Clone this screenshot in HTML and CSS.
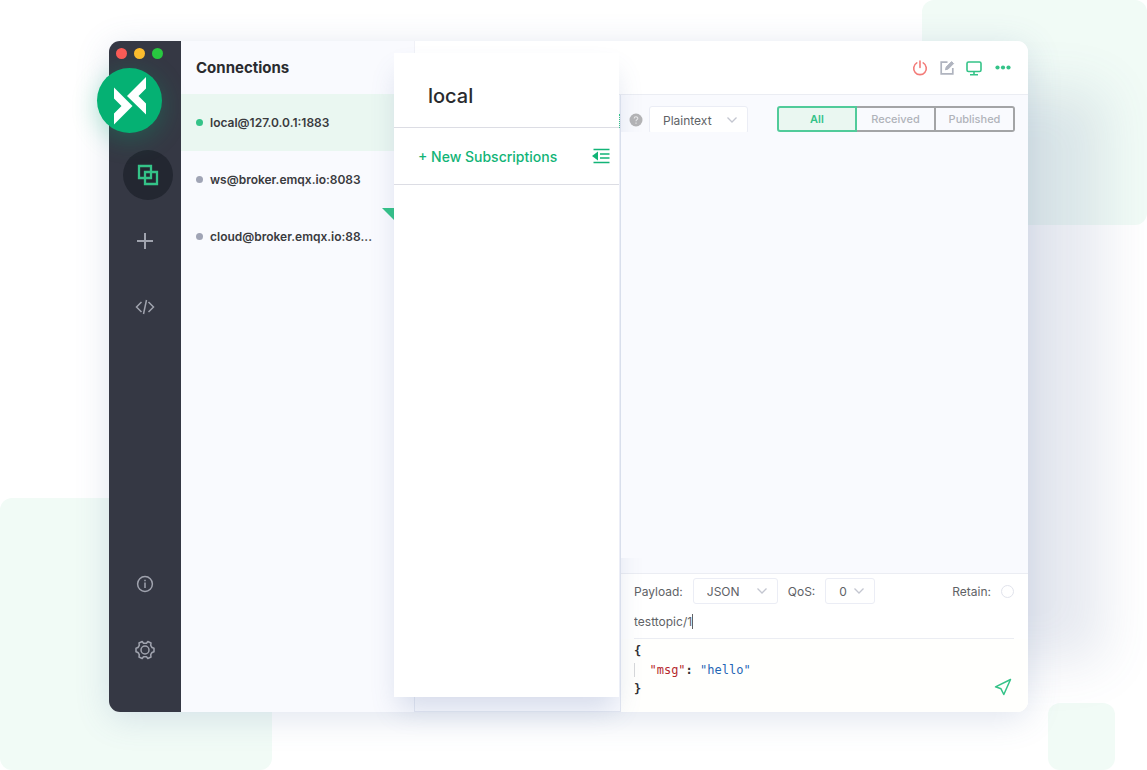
FILE: index.html
```html
<!DOCTYPE html>
<html lang="en">
<head>
  <meta charset="UTF-8">
  <meta name="viewport" content="width=device-width, initial-scale=1">
  <title>MQTTX</title>
  <link rel="stylesheet" href="styles.css">
</head>
<body>

<div class="deco deco-top"></div>
<div class="deco deco-left"></div>
<div class="deco deco-small"></div>

<div class="window">
  <!-- sidebar -->
  <aside class="sidebar">
    <div class="lights">
      <span class="light red"></span>
      <span class="light yellow"></span>
      <span class="light green"></span>
    </div>
    <nav class="nav">
      <button class="nav-item active" type="button" aria-label="Connections">
        <svg width="22" height="22" viewBox="0 0 22 22" fill="none" stroke="#34c388" stroke-width="2.300">
          <path d="M2 2h12v12H2zM8 8h12v12H8z"/>
        </svg>
      </button>
      <button class="nav-item" type="button" aria-label="New connection">
        <svg width="18" height="18" viewBox="0 0 18 18" fill="none" stroke="#a0a3ae" stroke-width="2">
          <path d="M9 1v16M1 9h16"/>
        </svg>
      </button>
      <button class="nav-item" type="button" aria-label="Script">
        <svg width="20" height="16" viewBox="0 0 20 16" fill="none" stroke="#a0a3ae" stroke-width="1.500">
          <path d="M6.500 3L1.500 8l5 5M13.500 3l5 5-5 5M11.500 1L8.500 15"/>
        </svg>
      </button>
      <span class="nav-space"></span>
      <button class="nav-item" type="button" aria-label="About">
        <svg width="18" height="18" viewBox="0 0 18 18" fill="none" stroke="#a0a3ae" stroke-width="1.500">
          <circle cx="9" cy="9" r="7.400"/>
          <path d="M9 7.500v5.500M9 4.800v1.500"/>
        </svg>
      </button>
      <button class="nav-item" type="button" aria-label="Settings">
        <svg width="20" height="20" viewBox="0 0 20 20" fill="none" stroke="#a0a3ae" stroke-width="1.500" stroke-linejoin="round">
          <circle cx="10" cy="10" r="4"/>
          <path d="M7.200 1.500L8.500 3.300H11.500L12.800 1.500L16 3L15.700 5.300L17 7.500L19 8.200V11.800L17 12.500L15.700 14.700L16 17L12.800 18.500L11.500 16.700H8.500L7.200 18.500L4 17L4.300 14.700L3 12.500L1 11.800V8.200L3 7.500L4.300 5.300L4 3Z"/>
        </svg>
      </button>
    </nav>
    <div class="logo">
      <svg width="34" height="50" viewBox="0 0 34 50" fill="#fff">
        <path d="M1 11.500L19.500 30L1 48.500V37.500L8.500 30L1 22.500Z"/>
        <path d="M33 1L14 20L33 38.500V27.500L25.500 20L33 12.500Z"/>
      </svg>
    </div>
  </aside>

  <!-- connections -->
  <section class="connections">
    <h1 class="connections-title">Connections</h1>
    <ul class="connection-list">
      <li><a class="connection online" href="#local"><span class="dot"></span><span class="name">local@127.0.0.1:1883</span></a></li>
      <li><a class="connection" href="#ws"><span class="dot"></span><span class="name">ws@broker.emqx.io:8083</span></a></li>
      <li><a class="connection ssl" href="#cloud"><span class="dot"></span><span class="name">cloud@broker.emqx.io:88...</span></a></li>
    </ul>
  </section>

  <main class="main">
    <header class="topbar">
      <button class="icon-btn" type="button" aria-label="Disconnect">
        <svg width="16" height="16" viewBox="0 0 16 16" fill="none" stroke="#f37b78" stroke-width="1.600" stroke-linecap="round">
          <path d="M4.800 2.900a6.300 6.300 0 1 0 6.400 0M8 1v6.500"/>
        </svg>
      </button>
      <button class="icon-btn" type="button" aria-label="Edit">
        <svg width="16" height="16" viewBox="0 0 16 16" fill="none" stroke="#b0b4bf">
          <path d="M8.500 2.200H2.200v11.600h11.600V8" stroke-width="1.700"/>
          <path d="M6.500 9.800L7.200 7L12.600 1.600L14.600 3.600L9.200 9Z" fill="#b0b4bf" stroke-width="1"/>
        </svg>
      </button>
      <button class="icon-btn" type="button" aria-label="Monitor">
        <svg width="16" height="16" viewBox="0 0 16 16" fill="none" stroke="#34c388" stroke-width="1.600">
          <rect x="1" y="2" width="14" height="9.500" rx="1.500"/>
          <path d="M8 11.500v3M4 14.700h8"/>
        </svg>
      </button>
      <button class="icon-btn" type="button" aria-label="More">
        <svg width="16" height="16" viewBox="0 0 16 16" fill="#34c388">
          <circle cx="2.500" cy="7.500" r="2.100"/><circle cx="8" cy="7.500" r="2.100"/><circle cx="13.500" cy="7.500" r="2.100"/>
        </svg>
      </button>
    </header>

    <div class="content">
      <div class="topics"><span class="drag"></span></div>

      <section class="chat">
        <div class="toolbar">
          <svg class="help" width="14" height="14" viewBox="0 0 14 14" fill="none">
            <circle cx="7" cy="7" r="6.500" fill="#b4b4b6"/>
            <path d="M5.200 5.600C5.200 3.200 8.800 3.300 8.800 5.400C8.800 6.700 7 6.700 7 8.300M7 9.500v1.200" stroke="#e8e8ea" stroke-width="1.100"/>
          </svg>
          <span class="select format">
            <select aria-label="Format"><option>Plaintext</option></select>
            <svg width="12" height="8" viewBox="0 0 12 8" fill="none" stroke="#c3c6d0" stroke-width="1.300"><path d="M1.500 1.500L6 6l4.500-4.500"/></svg>
          </span>
          <div class="filter">
            <button class="checked" type="button">All</button>
            <button type="button">Received</button>
            <button type="button">Published</button>
          </div>
        </div>

        <div class="messages"></div>

        <form class="publish">
          <div class="options">
            <label for="payload">Payload:</label>
            <span class="select payload">
              <select id="payload"><option>JSON</option></select>
              <svg width="12" height="8" viewBox="0 0 12 8" fill="none" stroke="#c3c6d0" stroke-width="1.300"><path d="M1.500 1.500L6 6l4.500-4.500"/></svg>
            </span>
            <label for="qos">QoS:</label>
            <span class="select qos">
              <select id="qos"><option>0</option></select>
              <svg width="12" height="8" viewBox="0 0 12 8" fill="none" stroke="#c3c6d0" stroke-width="1.300"><path d="M1.500 1.500L6 6l4.500-4.500"/></svg>
            </span>
            <label class="retain">Retain: <input type="checkbox"></label>
          </div>
          <div class="topic">
            <input type="text" value="testtopic/1" aria-label="Topic"><span class="caret"></span>
          </div>
          <div class="editor">
            <pre class="code" role="textbox" aria-label="Message" aria-multiline="true" contenteditable="true" spellcheck="false"><span>{</span>
<span class="indent">  <span class="key">"msg"</span>: <span class="value">"hello"</span></span>
<span>}</span></pre>
            <button class="icon-btn" type="submit" aria-label="Send">
              <svg width="18" height="18" viewBox="0 0 18 18" fill="none" stroke="#34c388" stroke-width="1.500" stroke-linejoin="round">
                <path d="M16.500 1.500L1.500 8.800L7 10.800L9.800 16.500Z"/>
              </svg>
            </button>
          </div>
        </form>
      </section>
    </div>

    <!-- subscriptions panel, lies over the window -->
    <section class="panel">
      <h2 class="panel-title">local</h2>
      <div class="panel-actions">
        <button class="new-sub" type="button">+ New Subscriptions</button>
        <button class="icon-btn" type="button" aria-label="Hide subscriptions">
          <svg width="18" height="16" viewBox="0 0 18 16" fill="none" stroke="#12b477" stroke-width="1.500">
            <path d="M1.500 1.500H17.500M8 6H17.500M8 10H17.500M1.500 14.500H17.500"/>
            <path d="M6 3.500V12.500L0 8Z" fill="#12b477" stroke="none"/>
          </svg>
        </button>
      </div>
    </section>
  </main>
</div>

</body>
</html>
```

FILE: styles.css
```css
* {
  box-sizing: border-box;
}

body {
  position: relative;
  display: flex;
  min-height: 100vh;
  margin: 0;
  padding: 41px 119px 58px 109px;
  overflow: hidden;
  background: #fff;
  color: #2a2b2e;
  font-family: Inter, "Liberation Sans", sans-serif;
  font-size: 12px;
}

button,
input,
select {
  margin: 0;
  padding: 0;
  border: 0;
  background: none;
  color: inherit;
  font: inherit;
}

svg {
  display: block;
}

/* background squares */
.deco {
  position: absolute;
  border-radius: 12px;
  background: #f1fbf6;
}

.deco-top {
  top: 0;
  right: 0;
  width: 225px;
  height: 225px;
}

.deco-left {
  bottom: 0;
  left: 0;
  width: 272px;
  height: 272px;
}

.deco-small {
  right: 32px;
  bottom: 0;
  width: 67px;
  height: 67px;
}

.window {
  position: relative;
  display: grid;
  flex: 1;
  grid-template-columns: 72px 233px 1fr;
  border-radius: 11px;
  background: #f9fafe;
  box-shadow:
    0 6px 34px rgba(80, 105, 160, 0.18),
    125px 0 50px -50px rgba(80, 100, 150, 0.14);
}

/* sidebar */
.sidebar {
  position: relative;
  display: flex;
  flex-direction: column;
  padding: 7px 8px 37px;
  border-radius: 11px 0 0 11px;
  background: #353844;
}

.lights {
  display: flex;
  gap: 7px;
  margin-left: -1px;
}

.light {
  width: 11px;
  height: 11px;
  border-radius: 50%;
}

.red { background: #fc5b57; }
.yellow { background: #fdbc2e; }
.green { background: #28c840; }

.nav {
  display: flex;
  flex: 1;
  flex-direction: column;
  align-items: center;
  gap: 16px;
  padding-top: 91px;
}

.nav-item {
  display: grid;
  place-items: center;
  width: 50px;
  height: 50px;
  border-radius: 50%;
}

.nav-item.active {
  align-self: flex-end;
  background: #232731;
}

.nav-space {
  flex: 1;
}

.logo {
  position: absolute;
  top: 27px;
  left: -12px;
  display: grid;
  place-items: center;
  width: 65px;
  height: 65px;
  border-radius: 50%;
  background: #05b173;
  box-shadow: 0 6px 26px rgba(5, 177, 115, 0.3);
}

/* connections */
.connections-title {
  display: flex;
  align-items: center;
  height: 53px;
  margin: 0;
  padding-left: 15px;
  font-size: 15px;
  font-weight: 700;
}

.connection-list {
  margin: 0;
  padding: 0;
  list-style: none;
}

.connection {
  position: relative;
  display: flex;
  align-items: center;
  gap: 7px;
  height: 57px;
  padding-left: 15px;
  color: #3a3b3e;
  font-size: 12px;
  font-weight: 600;
  text-decoration: none;
}

.connection.online {
  background: #eaf7f1;
}

.dot {
  width: 7px;
  height: 7px;
  border-radius: 50%;
  background: #a0a4b5;
}

.online .dot {
  background: #34c388;
}

.ssl::after {
  content: "";
  position: absolute;
  top: 0;
  right: 0;
  width: 32px;
  height: 32px;
  background: #34c388;
  clip-path: polygon(0 0, 100% 0, 100% 100%);
}

/* main */
.main {
  position: relative;
  display: flex;
  flex-direction: column;
  min-width: 0;
}

.topbar {
  display: flex;
  align-items: center;
  justify-content: flex-end;
  gap: 11px;
  height: 54px;
  padding: 0 17px;
  border-bottom: 1px solid #ebedf3;
  border-left: 1px solid #f0f1f7;
  border-radius: 0 11px 0 0;
  background: #fff;
}

.topbar .icon-btn:last-child {
  padding-left: 2px;
}

.content {
  display: grid;
  flex: 1;
  grid-template-columns: 207px 1fr;
}

.topics {
  display: flex;
  justify-content: flex-end;
  border: solid #e4e8f2;
  border-width: 0 1px 1px;
}

.drag {
  position: relative;
  z-index: 2;
  height: 14px;
  margin-top: 19px;
  border-right: 1px dotted #34c388;
}

.chat {
  display: flex;
  flex-direction: column;
  min-width: 0;
}

.toolbar {
  display: flex;
  height: 37px;
  padding: 11px 13px 0 8px;
}

.help {
  margin: 7px 6px 0 0;
}

.select {
  display: grid;
  align-items: center;
  border: 1px solid #ebedf5;
  border-radius: 3px;
  background: #fff;
  color: #606266;
}

.select select {
  grid-area: 1 / 1;
  height: 24px;
  padding-left: 13px;
  appearance: none;
}

.select svg {
  grid-area: 1 / 1;
  justify-self: end;
  margin-right: 9px;
  pointer-events: none;
}

.format {
  width: 99px;
  height: 28px;
}

.filter {
  display: flex;
  height: 26px;
  margin-left: auto;
}

.filter button {
  width: 79px;
  border: solid #a3a4a6;
  border-width: 2px 2px 2px 0;
  color: #b0b3ba;
  font-size: 11px;
  font-weight: 500;
}

.filter button:last-child {
  border-radius: 0 3px 3px 0;
}

.filter .checked {
  width: 80px;
  border-color: #51cb9a;
  border-left-width: 2px;
  border-radius: 3px 0 0 3px;
  background: #eaf7f1;
  color: #34c388;
  font-weight: 600;
}

.messages {
  position: relative;
  z-index: 2;
  flex: 1;
  margin-bottom: 15px;
  background: #f9fafe;
}

/* publish form */
.publish {
  border-top: 1px solid #ebedf3;
  border-radius: 0 0 11px 0;
  background: #fff;
  color: #606266;
}

.options {
  display: flex;
  align-items: center;
  gap: 10px;
  padding: 4px 14px 0 13px;
}

.payload {
  width: 85px;
}

.qos {
  width: 50px;
}

.retain {
  display: flex;
  align-items: center;
  gap: 10px;
  margin-left: auto;
}

.retain input {
  width: 13px;
  height: 13px;
  border: 1px solid #e1e3ec;
  border-radius: 50%;
  appearance: none;
}

.topic {
  display: flex;
  align-items: center;
  height: 35px;
  margin: 0 14px 0 13px;
  border-bottom: 1px solid #ebedf3;
}

.topic input {
  field-sizing: content;
  outline: 0;
}

.caret {
  width: 1px;
  height: 15px;
  background: #606266;
}

.editor {
  display: flex;
  align-items: flex-end;
  justify-content: space-between;
  padding: 3px 16px 13px 13px;
  border-radius: 0 0 11px 0;
  background: #fffffd;
}

.editor .icon-btn {
  padding-bottom: 3px;
}

.code {
  margin: 0;
  color: #303134;
  font-family: "DejaVu Sans Mono", "Liberation Mono", monospace;
  font-size: 12px;
  font-weight: 600;
  line-height: 19px;
}

.indent {
  border-left: 1px solid #d6d8da;
}

.key { color: #b5282c; }
.value { color: #1f66b5; }

.key,
.value {
  font-weight: 400;
}

/* subscriptions panel */
.panel {
  position: absolute;
  top: 12px;
  bottom: 15px;
  left: -20px;
  z-index: 1;
  width: 225px;
  background: #fff;
  box-shadow: 0 16px 26px -4px rgba(80, 105, 160, 0.2);
}

.panel-title {
  display: flex;
  align-items: center;
  height: 75px;
  margin: 0;
  padding: 12px 34px 0;
  border-bottom: 1px solid #dcdde4;
  font-size: 20px;
  font-weight: 500;
}

.panel-actions {
  display: flex;
  align-items: center;
  justify-content: space-between;
  height: 57px;
  padding: 0 9px 0 24px;
  border-bottom: 1px solid #dcdde4;
}

.new-sub {
  color: #12b477;
  font-size: 14px;
  font-weight: 500;
}
```
